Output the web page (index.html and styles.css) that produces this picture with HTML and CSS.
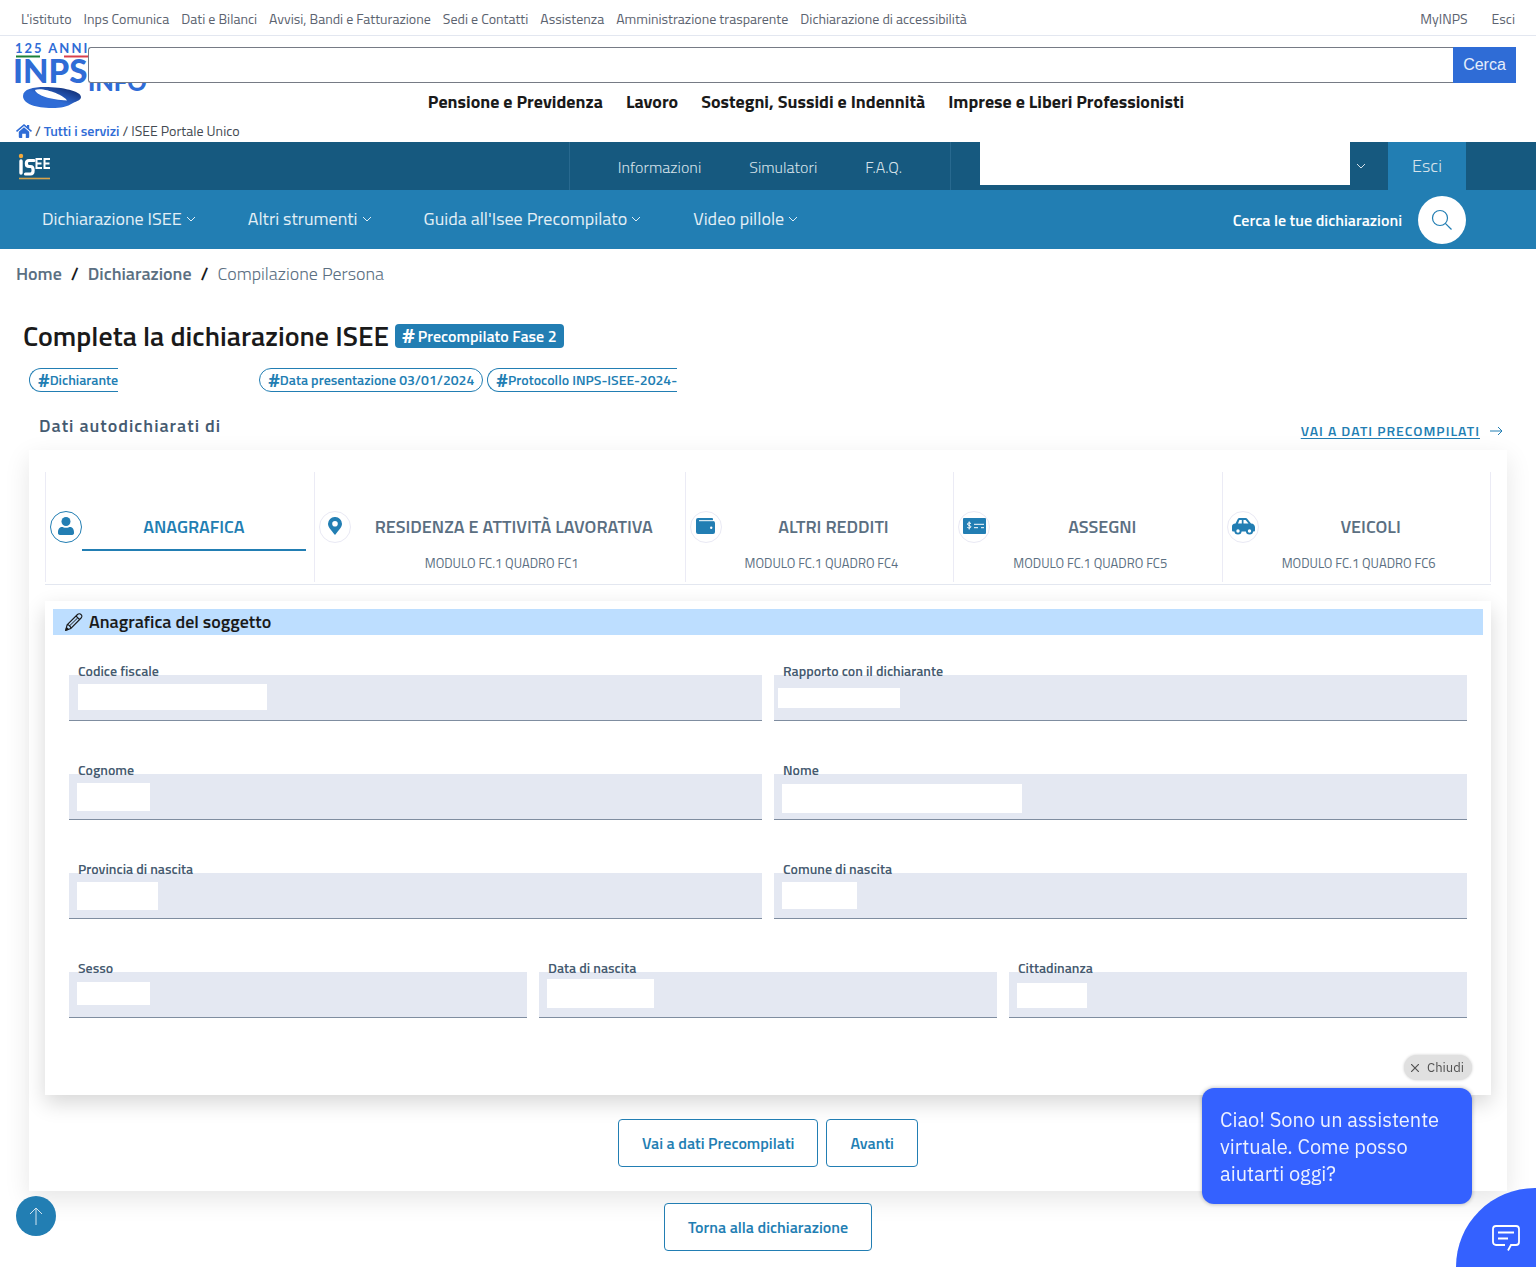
FILE: index.html
```html
<!DOCTYPE html>
<html lang="it">
<head>
<meta charset="utf-8">
<meta name="viewport" content="width=device-width, initial-scale=1">
<title>ISEE Portale Unico - Compilazione Persona</title>
<link rel="stylesheet" href="styles.css">
</head>
<body>
<svg class="sprite" aria-hidden="true">
  <symbol id="chevron" viewBox="0 0 10 6"><path d="M1 1l4 4 4-4" fill="none" stroke="currentColor"/></symbol>
</svg>

<nav class="topbar" aria-label="Istituto">
  <div class="topbar-links">
    <a href="#">L'istituto</a>
    <a href="#">Inps Comunica</a>
    <a href="#">Dati e Bilanci</a>
    <a href="#">Avvisi, Bandi e Fatturazione</a>
    <a href="#">Sedi e Contatti</a>
    <a href="#">Assistenza</a>
    <a href="#">Amministrazione trasparente</a>
    <a href="#">Dichiarazione di accessibilità</a>
  </div>
  <div class="topbar-user">
    <a href="#">MyINPS</a>
    <a href="#">Esci</a>
  </div>
</nav>

<header class="site-header">
  <a class="logo" href="#" aria-label="INPS">
    <svg width="132" height="68" viewBox="0 0 132 68">
      <defs>
        <linearGradient id="ring" x1="0" y1="1" x2="1" y2="0">
          <stop offset="0.45" stop-color="#2f6cd6"/><stop offset="1" stop-color="#0a1f5c"/>
        </linearGradient>
      </defs>
      <text class="logo-years" x="-1" y="11">125 ANNI</text>
      <path d="M0 14.500h24" stroke="#1c8038" stroke-width="2"/>
      <path d="M48 14.500h26" stroke="#d8404c" stroke-width="2"/>
      <text class="logo-name" x="-3" y="41">INPS</text>
      <text class="logo-info" x="72" y="49">INFO</text>
      <path fill-rule="evenodd" fill="url(#ring)" d="M7 54C7 47 17 45 29 45C46 45 65 49 65 55C65 58 61 59 57 61C51 65 45 66 36 66C20 66 7 62 7 54ZM19 48C20 53 35 58 51 58.500C48 53 27 45 19 48Z"/>
    </svg>
  </a>
  <div class="header-main">
    <form class="search" role="search">
      <input class="search-input" type="search" aria-label="Cerca nel sito">
      <button class="search-button" type="button">Cerca</button>
    </form>
    <nav class="main-nav" aria-label="Principale">
      <a href="#">Pensione e Previdenza</a>
      <a href="#">Lavoro</a>
      <a href="#">Sostegni, Sussidi e Indennità</a>
      <a href="#">Imprese e Liberi Professionisti</a>
    </nav>
  </div>
</header>

<nav class="service-path" aria-label="Percorso servizio">
  <a href="#" aria-label="Home"><svg width="16" height="14" viewBox="0 0 16 14" fill="currentColor"><path d="M8 3.200l5.200 4.500V13a1 1 0 0 1-1 1H9.800V9.800H6.200V14H3.800a1 1 0 0 1-1-1V7.700z"/><path d="M8 0l3 2.500V1h2.200v3.400L16 6.800l-1 1.100L8 2 1 7.900 0 6.800z"/></svg></a>
  <span>/</span>
  <a href="#">Tutti i servizi</a>
  <span>/</span>
  <span>ISEE Portale Unico</span>
</nav>

<div class="slim-bar">
  <a class="isee-logo" href="#" aria-label="ISEE">
    <svg width="34" height="28" viewBox="0 0 34 28">
      <circle cx="4" cy="3" r="2.200" fill="#f3a93c"/>
      <path d="M4 8v12" stroke="#fff" stroke-width="3.400" stroke-linecap="round"/>
      <path d="M17 7.500h-5c-3.500 0-3.500 6 0 6h1.500c3.500 0 3.500 7.500 0 7.500H8.500" fill="none" stroke="#fff" stroke-width="3.200" stroke-linecap="round"/>
      <path d="M25 6h-5.500v9H25M19.500 10.500h5M33 6h-5.500v9H33M27.500 10.500h5" fill="none" stroke="#fff" stroke-width="2"/>
      <path d="M2 25.500h31" stroke="#d9a34a" stroke-width="1.600"/>
    </svg>
  </a>
  <nav class="slim-nav" aria-label="Informazioni">
    <a href="#">Informazioni</a>
    <a href="#">Simulatori</a>
    <a href="#">F.A.Q.</a>
  </nav>
  <div class="slim-user">
    <span class="user-name"></span>
    <button class="user-toggle" type="button" aria-label="Profilo"><svg width="10" height="6"><use href="#chevron"/></svg></button>
    <a class="logout" href="#">Esci</a>
  </div>
</div>

<div class="menu-bar">
  <nav class="menu" aria-label="Menu ISEE">
    <a href="#">Dichiarazione ISEE <svg width="10" height="6"><use href="#chevron"/></svg></a>
    <a href="#">Altri strumenti <svg width="10" height="6"><use href="#chevron"/></svg></a>
    <a href="#">Guida all'Isee Precompilato <svg width="10" height="6"><use href="#chevron"/></svg></a>
    <a href="#">Video pillole <svg width="10" height="6"><use href="#chevron"/></svg></a>
  </nav>
  <div class="find">
    <span id="find-label">Cerca le tue dichiarazioni</span>
    <button class="find-button" type="button" aria-labelledby="find-label"><svg width="22" height="22" viewBox="0 0 22 22" fill="none" stroke="currentColor" stroke-width="1.200"><circle cx="9" cy="9" r="7.500"/><path d="M14.300 14.300L20.500 20.500"/></svg></button>
  </div>
</div>

<nav class="breadcrumb" aria-label="Briciole di pane">
  <a href="#">Home</a>
  <span class="sep">/</span>
  <a href="#">Dichiarazione</a>
  <span class="sep">/</span>
  <span class="current">Compilazione Persona</span>
</nav>

<main class="page">
  <div class="title-row">
    <h1>Completa la dichiarazione ISEE</h1>
    <span class="badge"><b>#</b> Precompilato Fase 2</span>
  </div>

  <div class="chips">
    <span class="chip chip-cut chip-owner"><b>#</b>Dichiarante</span>
    <span class="chip"><b>#</b>Data presentazione 03/01/2024</span>
    <span class="chip chip-cut"><b>#</b>Protocollo INPS-ISEE-2024-</span>
  </div>

  <div class="section-head">
    <h2>Dati autodichiarati di</h2>
    <a class="go-link" href="#"><span>VAI A DATI PRECOMPILATI</span><svg width="13" height="10" viewBox="0 0 13 10" fill="none" stroke="currentColor"><path d="M0 5h12M8 1l4 4-4 4"/></svg></a>
  </div>

  <section class="card">
    <nav class="tabs" aria-label="Quadri">
      <a class="tab active" href="#" aria-current="page">
        <span class="tab-icon"><svg width="16" height="18" viewBox="0 0 16 18" fill="currentColor"><circle cx="8" cy="4.500" r="4.500"/><path d="M0 15.500C0 11.500 2 10 4 10c1 0 2 .8 4 .8s3-.8 4-.8c2 0 4 1.500 4 5.500a2 2 0 0 1-2 2.500H2a2 2 0 0 1-2-2.500z"/></svg></span>
        <span class="tab-text"><span class="tab-title">ANAGRAFICA</span></span>
      </a>
      <a class="tab" href="#">
        <span class="tab-icon"><svg width="14" height="18" viewBox="0 0 14 18"><path fill="currentColor" fill-rule="evenodd" d="M7 0a6.800 6.800 0 0 1 7 6.800C14 10 11 13 7 18 3 13 0 10 0 6.800A6.800 6.800 0 0 1 7 0zm0 4a2.800 2.800 0 1 0 0 5.600A2.800 2.800 0 0 0 7 4z"/></svg></span>
        <span class="tab-text"><span class="tab-title">RESIDENZA E ATTIVITÀ LAVORATIVA</span><span class="tab-sub">MODULO FC.1 QUADRO FC1</span></span>
      </a>
      <a class="tab" href="#">
        <span class="tab-icon"><svg width="19" height="16" viewBox="0 0 19 16"><path fill="currentColor" d="M2 0h14a1 1 0 0 1 1 1v2a2 2 0 0 1 2 2v9a2 2 0 0 1-2 2H2a2 2 0 0 1-2-2V2a2 2 0 0 1 2-2z"/><path d="M3 2.700h14" stroke="#fff"/><circle cx="15.200" cy="9.700" r="1.200" fill="#fff"/></svg></span>
        <span class="tab-text"><span class="tab-title">ALTRI REDDITI</span><span class="tab-sub">MODULO FC.1 QUADRO FC4</span></span>
      </a>
      <a class="tab" href="#">
        <span class="tab-icon"><svg width="23" height="16" viewBox="0 0 23 16"><rect width="23" height="16" rx="1" fill="currentColor"/><path d="M11 6.300h10M11 9.700h4M18 9.700h3" stroke="#fff"/><path d="M8 5.500C6.500 4.600 4.500 4.800 4.500 6.100c0 1.700 3.400 1 3.400 2.700 0 1.300-2.200 1.400-3.600.6M6.200 3.500v8" fill="none" stroke="#fff"/></svg></span>
        <span class="tab-text"><span class="tab-title">ASSEGNI</span><span class="tab-sub">MODULO FC.1 QUADRO FC5</span></span>
      </a>
      <a class="tab" href="#">
        <span class="tab-icon"><svg width="23" height="17" viewBox="0 0 23 17"><path fill="currentColor" d="M5.500 1.500C6 .4 6.800 0 8 0h5c1.200 0 2 .4 2.800 1.400L19 5.500c2.600.2 4 1.600 4 4V12c0 1-.5 1.500-1.500 1.500H1.500C.5 13.500 0 13 0 12V8.500C0 6.800 1 5.800 3.500 5.500z"/><path fill="#fff" d="M7.300 2.200L6 5.500h3.800V2H8c-.4 0-.6 0-.7.200zM11.500 2v3.500h5L14 2.400c-.3-.3-.5-.4-.9-.4z"/><circle cx="6" cy="13" r="3.600" fill="currentColor"/><circle cx="17.500" cy="13" r="3.600" fill="currentColor"/><circle cx="6" cy="13" r="1.700" fill="#fff"/><circle cx="17.500" cy="13" r="1.700" fill="#fff"/></svg></span>
        <span class="tab-text"><span class="tab-title">VEICOLI</span><span class="tab-sub">MODULO FC.1 QUADRO FC6</span></span>
      </a>
    </nav>

    <section class="panel">
      <h3 class="panel-title">
        <svg width="18" height="18" viewBox="0 0 18 18" fill="none" stroke="currentColor" stroke-width="1.100"><path d="M.8 17.200l1.300-5.400L12.500 1.500c1.200-1.200 2.600-.9 3.500 0 1 .9 1.300 2.300.1 3.500L5.800 15.500zM2.100 11.800c1.800-.2 3.900 1.700 3.700 3.700M11 3l3.700 3.700"/><path d="M4.200 13.200l8.600-8.400" stroke-width="1"/><path d="M.8 17.200l.7-2.600 1.900 1.900z" fill="currentColor"/></svg>
        Anagrafica del soggetto
      </h3>
      <form class="fields">
        <div class="field half"><label for="cf">Codice fiscale</label><input id="cf" type="text" readonly><span class="mask mask-cf"></span></div>
        <div class="field half"><label for="rapporto">Rapporto con il dichiarante</label><input id="rapporto" type="text" readonly><span class="mask mask-rapporto"></span></div>
        <div class="field half"><label for="cognome">Cognome</label><input id="cognome" type="text" readonly><span class="mask mask-cognome"></span></div>
        <div class="field half"><label for="nome">Nome</label><input id="nome" type="text" readonly><span class="mask mask-nome"></span></div>
        <div class="field half"><label for="provincia">Provincia di nascita</label><input id="provincia" type="text" readonly><span class="mask mask-provincia"></span></div>
        <div class="field half"><label for="comune">Comune di nascita</label><input id="comune" type="text" readonly><span class="mask mask-comune"></span></div>
        <div class="field third"><label for="sesso">Sesso</label><input id="sesso" type="text" readonly><span class="mask mask-sesso"></span></div>
        <div class="field third"><label for="data">Data di nascita</label><input id="data" type="text" readonly><span class="mask mask-data"></span></div>
        <div class="field third"><label for="cittadinanza">Cittadinanza</label><input id="cittadinanza" type="text" readonly><span class="mask mask-cittadinanza"></span></div>
      </form>
    </section>

    <div class="actions">
      <button class="btn" type="button">Vai a dati Precompilati</button>
      <button class="btn" type="button">Avanti</button>
    </div>
  </section>

  <div class="actions">
    <button class="btn" type="button">Torna alla dichiarazione</button>
  </div>
</main>

<a class="to-top" href="#" aria-label="Torna su"><svg width="14" height="18" viewBox="0 0 14 18" fill="none" stroke="currentColor"><path d="M7 18V1M1 7l6-6 6 6"/></svg></a>

<aside class="chat" aria-label="Assistente virtuale">
  <button class="chat-close" type="button"><svg width="8" height="8" viewBox="0 0 8 8" fill="none" stroke="currentColor" stroke-width="1.200"><path d="M0 0l8 8M8 0L0 8"/></svg>Chiudi</button>
  <p class="chat-bubble">Ciao! Sono un assistente virtuale. Come posso aiutarti oggi?</p>
</aside>
<button class="chat-launcher" type="button" aria-label="Apri chat"><svg width="28" height="26" viewBox="0 0 28 26" fill="none" stroke="currentColor" stroke-width="1.800"><path d="M13 20H4a3 3 0 0 1-3-3V4a3 3 0 0 1 3-3h20a3 3 0 0 1 3 3v13a3 3 0 0 1-3 3h-5l-3 5.500M6 7.500h16M6 13.500h10"/></svg></button>
</body>
</html>
```
FILE: styles.css
```css
* { box-sizing: border-box; }

body {
  margin: 0;
  background: #fff;
  color: #1a1a1a;
  font-family: "Titillium Web", Roboto, "Liberation Sans", sans-serif;
  font-size: 16px;
  line-height: 24px;
}

a { color: inherit; text-decoration: none; }
h1, h2, h3, p { margin: 0; }
button, input { font: inherit; }
button { padding: 0; border: 0; cursor: pointer; }
svg { flex: none; }
.sprite { display: none; }

/* Institute links */
.topbar {
  display: flex;
  justify-content: space-between;
  align-items: center;
  min-height: 36px;
  padding: 2px 21px 0;
  border-bottom: 1px solid #e3e7f0;
  color: #5c6370;
  font-size: 14px;
}
.topbar-links { display: flex; gap: 12px; }
.topbar-user { display: flex; gap: 24px; }

/* Site header */
.site-header { display: flex; padding: 6px 20px 0 16px; }
.logo { width: 72px; height: 76px; }
.logo svg { display: block; overflow: visible; }
.logo text { fill: #2f6cd6; font-family: Lato, sans-serif; font-weight: 900; }
.logo .logo-years { font-size: 13px; font-weight: 700; letter-spacing: 2px; }
.logo-name { font-size: 33px; }
.logo-info { font-size: 24px; }
.header-main { flex: 1; padding-top: 5px; }
.search { position: relative; display: flex; height: 36px; }
.search-input {
  flex: 1;
  min-width: 0;
  padding: 0 12px;
  border: 1px solid #767b85;
  border-right: 0;
  border-radius: 3px 0 0 3px;
  background: #fff;
}
.search-button {
  width: 63px;
  background: #2f6cd6;
  color: #e6eefb;
  font-family: "Liberation Sans", Arial, sans-serif;
  font-size: 16px;
}
.main-nav {
  display: flex;
  justify-content: center;
  gap: 23px;
  padding: 7px 0 0 8px;
  font-size: 18px;
  font-weight: 700;
}

.service-path {
  display: flex;
  align-items: center;
  gap: 3px;
  height: 24px;
  padding: 2px 16px 0;
  color: #444a52;
  font-size: 14px;
}
.service-path a { display: flex; color: #2f6cd6; font-weight: 600; }

/* ISEE bars */
.slim-bar {
  display: flex;
  height: 48px;
  padding: 0 70px 0 17px;
  background: #16597f;
  color: #d5e2ea;
}
.isee-logo { flex: 1; padding-top: 11px; }
.isee-logo svg { display: block; }
.slim-nav {
  display: flex;
  align-items: center;
  gap: 48px;
  padding: 2px 48px 0;
  border: 1px solid #28698f;
  border-width: 0 1px;
  font-weight: 300;
}
.slim-user { display: flex; padding-left: 29px; }
.user-name { width: 370px; height: 43px; background: #fff; }
.user-toggle { width: 38px; padding-right: 16px; background: none; color: inherit; }
.user-toggle svg { display: block; margin: 0 auto; }
.logout {
  width: 78px;
  background: #227eb3;
  font-size: 18px;
  font-weight: 300;
  line-height: 48px;
  text-align: center;
}
.menu-bar {
  display: flex;
  justify-content: space-between;
  align-items: center;
  min-height: 59px;
  padding: 0 70px 0 42px;
  background: #227eb3;
  color: #e3eff6;
}
.menu { display: flex; gap: 52px; padding-bottom: 2px; font-size: 18px; }
.menu a { display: flex; align-items: center; gap: 4px; }
.find { display: flex; align-items: center; gap: 16px; color: #fff; font-weight: 600; }
.find-button {
  display: grid;
  place-items: center;
  width: 48px;
  height: 48px;
  border-radius: 50%;
  background: #fff;
  color: #227eb3;
}

.breadcrumb {
  display: flex;
  gap: 9px;
  padding: 13px 16px 0;
  color: #5b6f82;
  font-size: 18px;
  font-weight: 600;
}
.breadcrumb .sep { color: #1a1a1a; }
.breadcrumb .current { font-weight: 300; }

/* Page content */
.page { padding: 36px 29px 17px; }
.title-row { display: flex; align-items: center; gap: 6px; margin-left: -6px; }
h1 { font-size: 28px; font-weight: 600; line-height: 28px; }
.badge {
  display: flex;
  align-items: center;
  gap: 3px;
  height: 24px;
  padding: 0 7px;
  border-radius: 4px;
  background: #227eb3;
  color: #fff;
  font-weight: 600;
}
.badge b, .chip b { font-family: "Open Sans", sans-serif; font-weight: 700; }
.badge b { font-size: 20px; }
.chips { display: flex; gap: 4px; margin-top: 18px; }
.chip {
  display: flex;
  align-items: center;
  height: 24px;
  padding: 0 8px;
  border: 1px solid #227eb3;
  border-radius: 12px;
  color: #227eb3;
  font-size: 14px;
  font-weight: 600;
}
.chip b { font-size: 18px; }
.chip-cut { padding-right: 0; border-right: 0; border-radius: 12px 0 0 12px; }
.chip-owner { margin-right: 137px; }

.section-head {
  display: flex;
  justify-content: space-between;
  align-items: flex-end;
  padding: 21px 4px 8px 10px;
}
h2 { padding-bottom: 3px; color: #455a70; font-size: 18px; font-weight: 600; letter-spacing: 1px; line-height: 26px; }
.go-link {
  display: flex;
  align-items: center;
  gap: 10px;
  color: #227eb3;
  font-size: 14px;
  font-weight: 600;
  letter-spacing: 1px;
  line-height: 22px;
}
.go-link span { text-decoration: underline; text-underline-offset: 2px; }

.card {
  padding: 22px 16px 24px;
  background: #fff;
  box-shadow: 0 8px 24px rgba(0, 0, 0, 0.1);
}
.tabs {
  display: grid;
  grid-template-columns: 269fr 371fr 269fr 269fr 269fr;
  padding-bottom: 2px;
  border-bottom: 1px solid #e3e7f0;
}
.tab {
  display: flex;
  min-height: 110px;
  padding: 39px 8px 0 4px;
  border-left: 1px solid #ebebf5;
  color: #5b6f82;
}
.tab:last-child { border-right: 1px solid #ebebf5; }
.tab-icon {
  display: grid;
  flex: none;
  place-items: center;
  width: 32px;
  height: 32px;
  padding-bottom: 2px;
  border: 1px solid #e9e9f4;
  border-radius: 50%;
  color: #227eb3;
}
.tab-text { display: flex; flex: 1; flex-direction: column; text-align: center; }
.tab-title { padding-top: 4px; font-size: 18px; font-weight: 600; line-height: 24px; }
.tab-sub { padding: 15px 24px 0 0; font-size: 13px; line-height: 18px; }
.active { color: #227eb3; }
.active .tab-icon { border-color: #227eb3; }
.active .tab-title { height: 40px; border-bottom: 2px solid #227eb3; }

.panel {
  margin-top: 16px;
  padding: 8px 8px 77px;
  background: #fff;
  box-shadow: 0 8px 20px rgba(0, 0, 0, 0.16);
}
.panel-title {
  display: flex;
  align-items: center;
  gap: 6px;
  padding: 0 12px;
  background: #bddeff;
  font-size: 18px;
  font-weight: 600;
  line-height: 26px;
}
.fields {
  display: grid;
  grid-template-columns: repeat(6, 1fr);
  gap: 40px 12px;
  padding: 27px 16px 0;
}
.half { grid-column: span 3; }
.third { grid-column: span 2; }
.field { position: relative; display: flex; flex-direction: column; }
.field label {
  z-index: 1;
  align-self: flex-start;
  margin: 0 9px -5px;
  color: #455a70;
  font-size: 14px;
  font-weight: 600;
  line-height: 18px;
}
.field input {
  width: 100%;
  height: 46px;
  padding: 0 9px;
  border: 0;
  border-bottom: 1px solid #7f8da0;
  border-radius: 0;
  background: #e4e8f2;
}

/* Blanked personal data lying over the inputs */
.mask { position: absolute; background: #fff; }
.mask-cf { left: 9px; bottom: 11px; width: 189px; height: 26px; }
.mask-rapporto { left: 4px; bottom: 13px; width: 122px; height: 20px; }
.mask-cognome { left: 8px; bottom: 9px; width: 73px; height: 28px; }
.mask-nome { left: 8px; bottom: 7px; width: 240px; height: 29px; }
.mask-provincia { left: 8px; bottom: 9px; width: 81px; height: 28px; }
.mask-comune { left: 8px; bottom: 10px; width: 75px; height: 27px; }
.mask-sesso { left: 8px; bottom: 13px; width: 73px; height: 23px; }
.mask-data { left: 8px; bottom: 10px; width: 107px; height: 29px; }
.mask-cittadinanza { left: 8px; bottom: 10px; width: 70px; height: 25px; }

.actions { display: flex; justify-content: center; gap: 8px; margin-top: 24px; }
.card + .actions { margin-top: 12px; }
.btn {
  height: 48px;
  padding: 0 23px;
  border: 1px solid #227eb3;
  border-radius: 4px;
  background: #fff;
  color: #227eb3;
  font-weight: 600;
}

/* Floating controls */
.to-top {
  position: fixed;
  bottom: 32px;
  left: 16px;
  display: grid;
  place-items: center;
  width: 40px;
  height: 40px;
  border-radius: 50%;
  background: #227eb3;
  color: #d3e5f0;
}
.chat {
  position: fixed;
  right: 64px;
  bottom: 64px;
  display: flex;
  flex-direction: column;
  align-items: flex-end;
  gap: 8px;
  width: 270px;
  font-family: "IBM Plex Sans", "Noto Sans", sans-serif;
}
.chat-close {
  display: flex;
  align-items: center;
  gap: 8px;
  padding: 0 8px 0 7px;
  border-radius: 13px;
  background: #e0e0e0;
  box-shadow: 0 0 3px rgba(0, 0, 0, 0.2);
  color: #525252;
  font-size: 13px;
  line-height: 25px;
}
.chat-bubble {
  padding: 18px 18px 17px;
  border-radius: 12px;
  background: #3461ff;
  box-shadow: 0 0 4px rgba(0, 0, 0, 0.3);
  color: #edf1ff;
  font-size: 20px;
  line-height: 27px;
}
.chat-launcher {
  position: fixed;
  right: 0;
  bottom: 1px;
  width: 80px;
  height: 79px;
  padding: 26px 0 0 20px;
  border-radius: 80px 0 0 0;
  background: #3461ff;
  color: #fff;
}
```
